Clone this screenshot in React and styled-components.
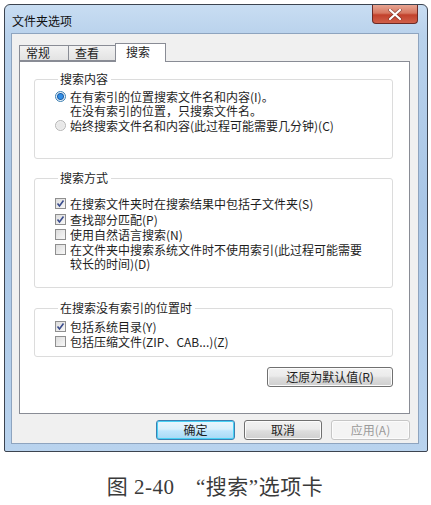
import React from "react";
import styled, { createGlobalStyle } from "styled-components";

const Global = createGlobalStyle`
  html, body {
    margin: 0;
    background: #ffffff;
  }
  body {
    font-family: "Noto Sans CJK SC", "Liberation Sans", sans-serif;
    font-size: 12px;
    color: #1e1e1e;
  }
`;

const Page = styled.div`
  width: 431px;
  height: 505px;
  padding: 4px 3px 0 4px;
  box-sizing: border-box;
  display: flex;
  flex-direction: column;
`;

const Window = styled.div`
  width: 424px;
  height: 448px;
  box-sizing: border-box;
  border: 1px solid #3c4450;
  border-radius: 6px 6px 2px 2px;
  background: linear-gradient(to bottom, #c8ddf2 0px, #b9d2ec 30px, #a9c6e6 200px, #b9d3ee 100%);
  display: flex;
  flex-direction: column;
  padding: 0 8px 7px 6px;
`;

const TitleBar = styled.div`
  height: 28px;
  display: flex;
  align-items: center;
  justify-content: space-between;
`;

const Title = styled.div`
  padding-left: 1px;
  padding-top: 2px;
  font-size: 12px;
  color: #101010;
`;

const CloseButton = styled.div`
  align-self: flex-start;
  width: 46px;
  height: 19px;
  margin-right: 1px;
  border: 1px solid #6b2a26;
  border-top: none;
  border-radius: 0 0 4px 4px;
  box-sizing: border-box;
  background: linear-gradient(to bottom, #e8a592 0%, #d67761 45%, #c2412c 55%, #d0604a 100%);
  display: flex;
  align-items: center;
  justify-content: center;
`;

const Client = styled.div`
  flex: 1;
  background: #f0f0f0;
  border: 1px solid #8ea4bf;
  display: flex;
  flex-direction: column;
  padding: 8px 8px 0 7px;
`;

const TabStrip = styled.div`
  display: flex;
  align-items: flex-end;
  height: 19px;
  position: relative;
  z-index: 1;
`;

const Tab = styled.div`
  box-sizing: border-box;
  width: ${(p) => p.$w}px;
  height: ${(p) => (p.$active ? 19 : 16)}px;
  margin-bottom: ${(p) => (p.$active ? -1 : 0)}px;
  border: 1px solid #898c95;
  border-bottom: ${(p) => (p.$active ? "none" : "1px solid #898c95")};
  margin-left: ${(p) => (p.$first ? 0 : -1)}px;
  background: ${(p) =>
    p.$active ? "#ffffff" : "linear-gradient(to bottom, #f2f2f2, #e3e3e3)"};
  padding: ${(p) => (p.$active ? "1px 0 0 10px" : "0 0 0 6px")};
  line-height: 14px;
  font-size: 12px;
  color: #1e1e1e;
`;

const TabPanel = styled.div`
  box-sizing: border-box;
  height: 353px;
  background: #ffffff;
  border: 1px solid #898c95;
  padding: 10px 16px 0 14px;
  display: flex;
  flex-direction: column;
`;

const Group = styled.fieldset`
  margin: 0 0 ${(p) => p.$gap}px 0;
  padding: ${(p) => p.$pad};
  height: ${(p) => p.$h}px;
  box-sizing: border-box;
  border: 1px solid #dcdcdc;
  border-radius: 3px;
  min-width: 0;
`;

const Legend = styled.legend`
  padding: 0 3px 0 2px;
  margin-left: 3px;
  font-size: 12px;
  line-height: 14px;
  color: #1e1e1e;
`;

const Option = styled.div`
  display: flex;
  align-items: flex-start;
  gap: 4px;
  margin-bottom: ${(p) => p.$mb || 0}px;
  color: ${(p) => (p.$disabled ? "#8a8a8a" : "#1e1e1e")};
`;

const OptionText = styled.div`
  line-height: 14px;
  font-size: 12px;
`;

const Radio = styled.div`
  width: 11px;
  height: 11px;
  margin-top: 1px;
  flex: none;
  border-radius: 50%;
  box-sizing: border-box;
  border: 1px solid ${(p) => (p.$on ? "#3c7fb1" : "#b5b5b5")};
  background: ${(p) =>
    p.$on
      ? "radial-gradient(circle, #2f8de6 0 2px, #1c5fa8 3px, #e8f0f8 4px)"
      : "radial-gradient(circle, #e8e8e8 0 3px, #f6f6f6 5px)"};
`;

const Check = styled.div`
  width: 11px;
  height: 11px;
  margin-top: 1px;
  flex: none;
  box-sizing: border-box;
  border: 1px solid #8f8f8f;
  background: linear-gradient(135deg, #dcdcdc, #f8f8f8);
  display: flex;
  align-items: center;
  justify-content: center;
`;

const RestoreRow = styled.div`
  display: flex;
  justify-content: flex-end;
  margin-top: 10px;
`;

const Button = styled.div`
  box-sizing: border-box;
  width: ${(p) => p.$w}px;
  height: 20px;
  border: 1px solid ${(p) => (p.$default ? "#3c7fb1" : p.$disabled ? "#c6c6c6" : "#707070")};
  border-radius: 3px;
  background: ${(p) =>
    p.$disabled
      ? "#f4f4f4"
      : p.$default
      ? "linear-gradient(to bottom, #eaf6fd 0%, #d9f0fc 45%, #bee6fd 55%, #a7d9f5 100%)"
      : "linear-gradient(to bottom, #f2f2f2 0%, #ebebeb 45%, #dddddd 55%, #cfcfcf 100%)"};
  box-shadow: ${(p) => (p.$default ? "inset 0 0 0 1px #48d1f5" : "inset 0 0 0 1px #fcfcfc")};
  color: ${(p) => (p.$disabled ? "#9a9a9a" : "#1e1e1e")};
  font-size: 12px;
  line-height: 18px;
  text-align: center;
`;

const ButtonRow = styled.div`
  display: flex;
  justify-content: flex-end;
  gap: 9px;
  margin-top: 6px;
`;

const Caption = styled.div`
  margin-top: 18px;
  text-align: center;
  padding-right: 2px;
  font-family: "Liberation Serif", "Noto Sans CJK SC", serif;
  font-size: 21px;
  color: #3a3a3a;
  letter-spacing: 0.5px;
`;

const Tick = () => (
  <svg width="9" height="9" viewBox="0 0 9 9">
    <path d="M1.5 4.5 L3.5 7 L7.5 1.5" fill="none" stroke="#3a4c8c" strokeWidth="1.6" />
  </svg>
);

const CloseX = () => (
  <svg width="14" height="11" viewBox="0 0 14 11">
    <path
      d="M2 1 L12 10 M12 1 L2 10"
      stroke="#4a1a14"
      strokeWidth="3.6"
      strokeLinecap="round"
      opacity="0.5"
    />
    <path d="M2 1 L12 10 M12 1 L2 10" stroke="#ffffff" strokeWidth="2.2" strokeLinecap="round" />
  </svg>
);

function CheckOption({ checked, children, mb }) {
  return (
    <Option $mb={mb}>
      <Check>{checked && <Tick />}</Check>
      <OptionText>{children}</OptionText>
    </Option>
  );
}

export default function App() {
  return (
    <Page>
      <Global />
      <Window>
        <TitleBar>
          <Title>文件夹选项</Title>
          <CloseButton>
            <CloseX />
          </CloseButton>
        </TitleBar>
        <Client>
          <TabStrip>
            <Tab $w={50} $first>常规</Tab>
            <Tab $w={48}>查看</Tab>
            <Tab $w={51} $active>搜索</Tab>
          </TabStrip>
          <TabPanel>
            <Group $h={87} $gap={12} $pad="4px 10px 0 20px">
              <Legend>搜索内容</Legend>
              <Option $mb={1}>
                <Radio $on />
                <OptionText>
                  在有索引的位置搜索文件名和内容(I)。
                  <br />
                  在没有索引的位置，只搜索文件名。
                </OptionText>
              </Option>
              <Option>
                <Radio />
                <OptionText>始终搜索文件名和内容(此过程可能需要几分钟)(C)</OptionText>
              </Option>
            </Group>
            <Group $h={117} $gap={13} $pad="12px 10px 0 20px">
              <Legend>搜索方式</Legend>
              <CheckOption checked mb={2}>在搜索文件夹时在搜索结果中包括子文件夹(S)</CheckOption>
              <CheckOption checked mb={1}>查找部分匹配(P)</CheckOption>
              <CheckOption mb={1}>使用自然语言搜索(N)</CheckOption>
              <CheckOption>
                在文件夹中搜索系统文件时不使用索引(此过程可能需要
                <br />
                较长的时间)(D)
              </CheckOption>
            </Group>
            <Group $h={56} $gap={0} $pad="5px 10px 0 20px">
              <Legend>在搜索没有索引的位置时</Legend>
              <CheckOption checked mb={1}>包括系统目录(Y)</CheckOption>
              <CheckOption>包括压缩文件(ZIP、CAB...)(Z)</CheckOption>
            </Group>
            <RestoreRow>
              <Button $w={126}>还原为默认值(R)</Button>
            </RestoreRow>
          </TabPanel>
          <ButtonRow>
            <Button $w={79} $default>确定</Button>
            <Button $w={78}>取消</Button>
            <Button $w={79} $disabled>应用(A)</Button>
          </ButtonRow>
        </Client>
      </Window>
      <Caption>图 2-40　“搜索”选项卡</Caption>
    </Page>
  );
}
